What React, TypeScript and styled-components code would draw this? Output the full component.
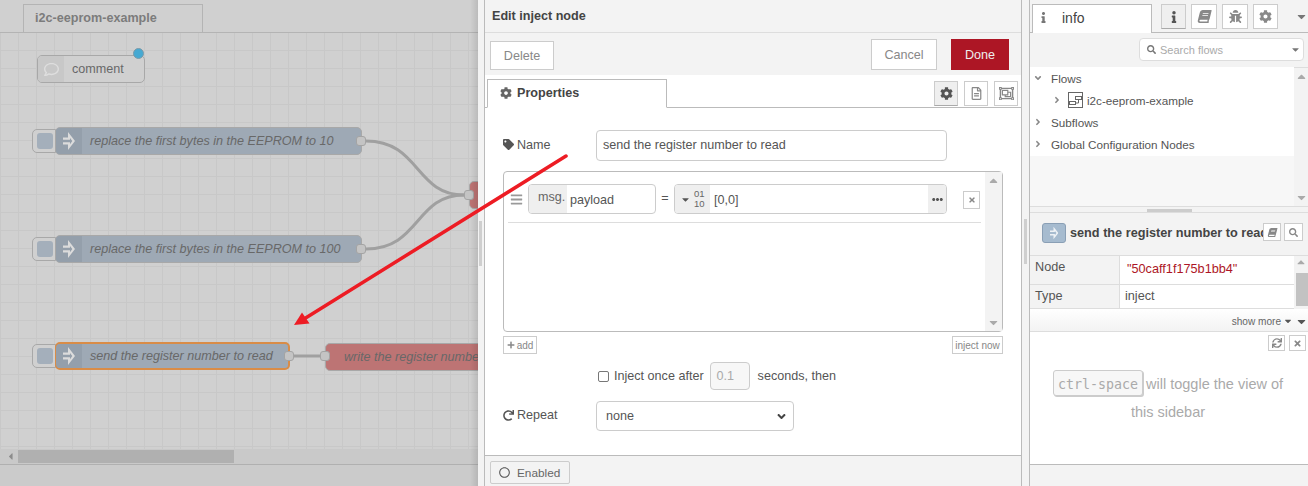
import styled, { createGlobalStyle } from "styled-components";
import {
  FaAngleDown,
  FaAngleRight,
  FaBars,
  FaBook,
  FaBug,
  FaCaretDown,
  FaCaretUp,
  FaCaretLeft,
  FaCog,
  FaEllipsisH,
  FaInfo,
  FaPlus,
  FaRedo,
  FaRegCircle,
  FaRegComment,
  FaRegFileAlt,
  FaRegObjectGroup,
  FaSearch,
  FaSync,
  FaTag,
  FaTimes,
} from "react-icons/fa";

const GlobalStyle = createGlobalStyle`
  html, body {
    margin: 0;
    padding: 0;
    background: #fff;
  }
  * {
    box-sizing: border-box;
  }
  body {
    font-family: "Liberation Sans", Arial, sans-serif;
    font-size: 12.6px;
    color: #555;
  }
`;

const Page = styled.div`
  position: relative;
  width: 1308px;
  height: 486px;
  display: flex;
  overflow: hidden;
`;

/* ---------- workspace ---------- */

const Workspace = styled.div`
  position: relative;
  width: 478px;
  display: flex;
  flex-direction: column;
  background: #d0d0d0;

  &::after {
    content: "";
    position: absolute;
    top: 0;
    right: 0;
    bottom: 0;
    width: 8px;
    background: linear-gradient(to right, rgba(0, 0, 0, 0), rgba(0, 0, 0, 0.1));
  }
`;

const WorkspaceTabs = styled.div`
  height: 33px;
  padding: 4px 0 0 23px;
  border-bottom: 1px solid #b4b4b4;
  flex: none;
`;

const WorkspaceTab = styled.div`
  width: 180px;
  height: 28px;
  padding: 0 11px;
  border: 1px solid #b4b4b4;
  border-bottom: none;
  font-weight: bold;
  line-height: 26px;
  color: #7c7c7c;
`;

const Canvas = styled.div`
  position: relative;
  flex: 1;
  overflow: hidden;
  background-color: #d0d0d0;
  background-image: linear-gradient(to right, #c8c8c8 1px, transparent 1px),
    linear-gradient(to bottom, #c8c8c8 1px, transparent 1px);
  background-size: 18px 18px;
  background-position: 0 17px;
`;

const Wires = styled.svg`
  position: absolute;
  top: 0;
  left: 0;
`;

const FlowNode = styled.div<{ $x: number; $y: number; $w: number; $tone: "blue" | "red" | "plain"; $selected?: boolean }>`
  position: absolute;
  left: ${(p) => p.$x}px;
  top: ${(p) => p.$y}px;
  width: ${(p) => p.$w}px;
  height: 28px;
  display: flex;
  align-items: center;
  border: ${(p) => (p.$selected ? "2px solid #d98c47" : "1px solid #a8a8a8")};
  border-radius: 5px;
  background: ${(p) => (p.$tone === "blue" ? "#9ea9b5" : p.$tone === "red" ? "#bd7474" : "#d0d0d0")};
  color: #686868;
  white-space: nowrap;
`;

const NodeIcon = styled.div<{ $tone: "blue" | "plain"; $selected?: boolean }>`
  width: 26px;
  margin-left: ${(p) => (p.$selected ? -1 : 0)}px;
  align-self: stretch;
  flex: none;
  display: flex;
  align-items: center;
  justify-content: center;
  border-radius: 4px 0 0 4px;
  background: ${(p) => (p.$tone === "blue" ? "#949fab" : "#c8c8c8")};
  color: #dcdcdc;
`;

const NodeLabel = styled.span<{ $italic?: boolean; $pad?: number }>`
  padding-left: ${(p) => p.$pad ?? 8}px;
  font-style: ${(p) => (p.$italic ? "italic" : "normal")};
`;

const InjectButton = styled.div<{ $x: number; $y: number }>`
  position: absolute;
  left: ${(p) => p.$x}px;
  top: ${(p) => p.$y}px;
  width: 24px;
  height: 24px;
  border: 1px solid #a8a8a8;
  border-radius: 5px 0 0 5px;
  background: #d0d0d0;

  &::after {
    content: "";
    position: absolute;
    left: 4px;
    top: 3px;
    width: 16px;
    height: 16px;
    border-radius: 3px;
    background: #a4afbb;
  }
`;

const Port = styled.div<{ $x: number; $y: number }>`
  position: absolute;
  left: ${(p) => p.$x - 5}px;
  top: ${(p) => p.$y - 5}px;
  width: 10px;
  height: 10px;
  border: 1px solid #a4a4a4;
  border-radius: 3px;
  background: #c4c4c4;
`;

const ChangedDot = styled.div`
  position: absolute;
  left: 133px;
  top: 15px;
  width: 11px;
  height: 11px;
  border-radius: 50%;
  border: 1px solid #7d9aa8;
  background: #46a9d2;
`;

const HScroll = styled.div`
  position: relative;
  height: 15px;
  flex: none;
  padding: 1px 0 1px 18px;
  background: #c9c9c9;
  color: #8c8c8c;
  font-size: 11px;

  svg {
    position: absolute;
    left: 5px;
    top: 2px;
  }
`;

const HThumb = styled.div`
  width: 216px;
  height: 13px;
  background: #b0b0b0;
`;

const WorkspaceFooter = styled.div`
  height: 22px;
  flex: none;
  border-top: 1px solid #b0b0b0;
  background: #cbcbcb;
`;

/* ---------- gutters between panels ---------- */

const Gutter = styled.div<{ $w: number; $handleLeft: number; $handleTop: number }>`
  position: relative;
  width: ${(p) => p.$w}px;
  flex: none;
  background: #f3f3f3;

  &::after {
    content: "";
    position: absolute;
    left: ${(p) => p.$handleLeft}px;
    top: ${(p) => p.$handleTop}px;
    width: 3px;
    height: 45px;
    background: #cfcfcf;
  }
`;

/* ---------- edit tray ---------- */

const Tray = styled.div`
  width: 538px;
  flex: none;
  display: flex;
  flex-direction: column;
  border-left: 1px solid #bbb;
  border-right: 1px solid #bbb;
  background: #fff;
`;

const TrayTitle = styled.div`
  height: 33px;
  flex: none;
  padding: 9px 7px 0;
  background: #f3f3f3;
  border-bottom: 1px solid #ddd;
  font-weight: bold;
  color: #444;
`;

const TrayToolbar = styled.div`
  height: 42px;
  flex: none;
  display: flex;
  align-items: flex-end;
  padding: 0 12px 5px 5px;
  gap: 14px;
  background: #f3f3f3;
`;

const Spacer = styled.div`
  flex: 1;
`;

const TrayButton = styled.button<{ $primary?: boolean; $h: number; $w: number }>`
  width: ${(p) => p.$w}px;
  height: ${(p) => p.$h}px;
  padding: 0;
  border: 1px solid ${(p) => (p.$primary ? "#ad1625" : "#ccc")};
  background: ${(p) => (p.$primary ? "#ad1625" : "#fff")};
  color: ${(p) => (p.$primary ? "#eee" : "#888")};
  font-family: inherit;
  font-size: 12.6px;
`;

const TrayTabs = styled.div`
  height: 33px;
  flex: none;
  display: flex;
  align-items: flex-end;
  padding: 0 2px 0 2px;
  border-bottom: 1px solid #bbb;
`;

const PropertiesTab = styled.div`
  width: 180px;
  height: 29px;
  margin-bottom: -1px;
  display: flex;
  align-items: center;
  gap: 5px;
  padding: 0 0 2px 12px;
  border: 1px solid #bbb;
  border-bottom: 1px solid #fff;
  background: #fff;
  font-weight: bold;
  color: #444;

  svg {
    color: #666;
    font-size: 12px;
  }
`;

const TabIcons = styled.div`
  margin-left: auto;
  display: flex;
  gap: 6px;
  padding: 0 1px 1px 0;
`;

const IconButton = styled.div<{ $w: number; $h: number; $active?: boolean; $size?: number }>`
  width: ${(p) => p.$w}px;
  height: ${(p) => p.$h}px;
  display: flex;
  align-items: center;
  justify-content: center;
  flex: none;
  border: 1px solid #ccc;
  border-bottom-color: ${(p) => (p.$active ? "#aaa" : "#ccc")};
  background: ${(p) => (p.$active ? "#efefef" : "#fff")};
  color: ${(p) => (p.$active ? "#555" : "#888")};
  font-size: ${(p) => p.$size ?? 13}px;
`;

const TiltedBook = styled(FaBook)`
  transform: skewX(-14deg);
`;

const TrayBody = styled.div`
  flex: 1;
  padding: 22px 18px 0;
  display: flex;
  flex-direction: column;
`;

const FormRow = styled.div<{ $mb?: number }>`
  display: flex;
  align-items: center;
  margin-bottom: ${(p) => p.$mb ?? 0}px;
`;

const FieldLabel = styled.label`
  width: 93px;
  margin-top: -2px;
  display: flex;
  align-items: center;
  gap: 3px;
  color: #555;

  svg {
    font-size: 11px;
  }
`;

const TextBox = styled.div`
  width: 351px;
  height: 31px;
  padding: 0 6px 1px;
  display: flex;
  align-items: center;
  border: 1px solid #ccc;
  border-radius: 4px;
  color: #555;
`;

const ListBox = styled.div`
  position: relative;
  width: 500px;
  height: 161px;
  border: 1px solid #bbb;
  border-radius: 4px;
  display: flex;
`;

const ListContent = styled.div`
  flex: 1;
  padding: 12px 4px 0 4px;
`;

const ListRow = styled.div`
  height: 39px;
  display: flex;
  align-items: flex-start;
  border-bottom: 1px solid #ddd;
  color: #999;
`;

const DragHandle = styled.div`
  width: 20px;
  height: 30px;
  padding-left: 2px;
  display: flex;
  align-items: center;
  font-size: 13px;
`;

const MsgField = styled.div`
  width: 128px;
  height: 30px;
  display: flex;
  align-items: stretch;
  border: 1px solid #ccc;
  border-radius: 4px;
  overflow: hidden;
  color: #555;
`;

const MsgPrefix = styled.div`
  width: 38px;
  padding: 5px 0 0 9px;
  background: #efefef;
  color: #666;
`;

const MsgValue = styled.div`
  padding: 8px 0 0 3px;
`;

const EqualSign = styled.div`
  width: 18px;
  height: 30px;
  line-height: 28px;
  text-align: center;
  color: #555;
`;

const TypedField = styled.div`
  width: 273px;
  height: 30px;
  display: flex;
  align-items: stretch;
  border: 1px solid #ccc;
  border-radius: 4px;
  overflow: hidden;
  color: #555;
`;

const TypeSelect = styled.div`
  width: 35px;
  flex: none;
  display: flex;
  align-items: center;
  gap: 3px;
  padding-left: 5px;
  background: #efefef;
  color: #555;
  font-size: 11px;
`;

const BinaryGlyph = styled.div`
  font-size: 9.5px;
  line-height: 10px;
  color: #666;
`;

const TypedValue = styled.div`
  flex: 1;
  padding: 8px 0 0 4px;
`;

const ExpandButton = styled.div`
  width: 18px;
  flex: none;
  display: flex;
  align-items: center;
  justify-content: center;
  background: #efefef;
  color: #555;
  font-size: 11px;
`;

const RemoveButton = styled.div`
  width: 17px;
  height: 18px;
  margin: 7px 0 0 16px;
  display: flex;
  align-items: center;
  justify-content: center;
  border: 1px solid #ccc;
  color: #888;
  font-size: 8px;
`;

const VScroll = styled.div<{ $w: number }>`
  width: ${(p) => p.$w}px;
  flex: none;
  display: flex;
  flex-direction: column;
  justify-content: space-between;
  align-items: center;
  padding: 2px 0;
  background: #f3f3f3;
  color: #aaa;
  font-size: 13px;
`;

const ListActions = styled.div`
  width: 500px;
  margin-top: 4px;
  display: flex;
  justify-content: space-between;
`;

const SmallButton = styled.div<{ $w: number }>`
  width: ${(p) => p.$w}px;
  height: 18px;
  display: flex;
  align-items: center;
  justify-content: center;
  gap: 2px;
  border: 1px solid #ccc;
  color: #888;
  font-size: 10px;

  svg {
    font-size: 8px;
  }
`;

const OnceRow = styled.div`
  margin: 8px 0 11px 93px;
  height: 28px;
  display: flex;
  align-items: center;
  color: #555;
`;

const CheckBox = styled.div`
  width: 11px;
  height: 11px;
  margin: 0 5px 0 2px;
  border: 1px solid #777;
  border-radius: 2px;
`;

const SecondsBox = styled.div`
  width: 40px;
  height: 28px;
  margin: 0 8px 0 6px;
  padding-left: 6px;
  line-height: 26px;
  border: 1px solid #ccc;
  border-radius: 4px;
  background: #f7f7f7;
  color: #aaa;
`;

const SelectBox = styled.div`
  width: 198px;
  height: 30px;
  padding: 0 5px 0 9px;
  display: flex;
  align-items: center;
  justify-content: space-between;
  border: 1px solid #ccc;
  border-radius: 4px;
  color: #555;

  svg {
    font-size: 13px;
    color: #444;
  }
`;

const TrayFooter = styled.div`
  height: 31px;
  flex: none;
  padding: 5px 5px 0;
  border-top: 1px solid #bbb;
  background: #f3f3f3;
`;

const EnabledButton = styled.div`
  width: 80px;
  height: 23px;
  display: flex;
  align-items: center;
  gap: 7px;
  padding-left: 8px;
  border: 1px solid #ccc;
  border-radius: 2px;
  color: #666;
  font-size: 11.8px;

  svg {
    font-size: 11px;
    color: #555;
  }
`;

/* ---------- sidebar ---------- */

const Sidebar = styled.div`
  width: 279px;
  flex: none;
  display: flex;
  flex-direction: column;
  border-left: 1px solid #bbb;
  background: #fff;
`;

const SidebarTabs = styled.div`
  height: 33px;
  flex: none;
  display: flex;
  align-items: flex-start;
  gap: 5px;
  padding: 4px 0 0 2px;
  background: #f3f3f3;
  border-bottom: 1px solid #bbb;
`;

const InfoTab = styled.div`
  width: 120px;
  height: 29px;
  margin-right: 4px;
  display: flex;
  align-items: center;
  gap: 13px;
  padding: 0 0 3px 5px;
  border: 1px solid #bbb;
  border-bottom: none;
  background: #fff;
  font-size: 14px;
  color: #444;

  svg {
    color: #777;
    font-size: 11px;
  }
`;

const MenuCaret = styled.div`
  margin: 6px 0 0 12px;
  color: #777;
  font-size: 13px;
`;

const SearchRow = styled.div`
  height: 35px;
  flex: none;
  padding: 5px 4px 0 0;
  display: flex;
  justify-content: flex-end;
  background: #f3f3f3;
  border-bottom: 1px solid #ddd;
`;

const SearchBox = styled.div`
  width: 165px;
  height: 23px;
  display: flex;
  align-items: center;
  padding: 0 2px 0 7px;
  gap: 4px;
  border: 1px solid #ddd;
  border-radius: 4px;
  background: #fff;
  color: #aaa;
  font-size: 11px;

  svg:first-child {
    color: #777;
    font-size: 9px;
  }
  svg:last-child {
    margin-left: auto;
    color: #777;
    font-size: 11px;
  }
`;

const TreePanel = styled.div`
  height: 138px;
  flex: none;
  display: flex;
`;

const TreeContent = styled.div`
  flex: 1;
  background: #f7f7f7;
`;

const TreeRows = styled.div`
  height: 89px;
  margin-top: -1px;
  background: #fff;
`;

const TreeRow = styled.div<{ $indent?: number }>`
  height: 22px;
  display: flex;
  align-items: center;
  padding-left: ${(p) => 3 + (p.$indent ?? 0)}px;
  color: #555;
  font-size: 11.7px;

  svg:first-child {
    flex: none;
    width: 10px;
    margin-right: 8px;
    color: #888;
    font-size: 10px;
  }
`;

const FlowGlyph = styled.svg`
  margin: 0 4px 0 -2px;
`;

const PanelHandle = styled.div`
  height: 7px;
  flex: none;
  display: flex;
  justify-content: center;
  padding-top: 2px;
  background: #f3f3f3;
  border-top: 1px solid #ddd;
  border-bottom: 1px solid #ddd;

  &::after {
    content: "";
    width: 45px;
    height: 3px;
    background: #ccc;
  }
`;

const NodeHeader = styled.div`
  height: 43px;
  flex: none;
  display: flex;
  align-items: flex-start;
  position: relative;
  padding: 10px 0 0 12px;
  background: #f3f3f3;
  border-bottom: 1px solid #ddd;
`;

const NodeChip = styled.div`
  width: 24px;
  height: 20px;
  flex: none;
  display: flex;
  align-items: center;
  justify-content: center;
  border: 1px solid #8a9fb5;
  border-radius: 3px;
  background: #a6bbcf;
`;

const NodeTitle = styled.div`
  width: 193px;
  margin-left: 4px;
  overflow: hidden;
  font-size: 12.7px;
  font-weight: bold;
  line-height: 20px;
  color: #444;
  white-space: nowrap;
`;

const HeaderActions = styled.div`
  position: absolute;
  right: 5px;
  top: 10px;
  display: flex;
  gap: 3px;
`;

const PropsPanel = styled.div`
  height: 53px;
  flex: none;
  display: flex;
`;

const PropsTable = styled.div`
  flex: 1;
  font-size: 12.7px;
`;

const PropRow = styled.div<{ $h: number }>`
  height: ${(p) => p.$h}px;
  display: flex;
  border-bottom: 1px solid #ddd;
`;

const PropKey = styled.div`
  width: 90px;
  flex: none;
  padding: 4px 0 0 5px;
  background: #f3f3f3;
  border-right: 1px solid #ddd;
  color: #555;
`;

const PropValue = styled.div<{ $red?: boolean }>`
  padding: ${(p) => (p.$red ? "6px 0 0 7px" : "4px 0 0 5px")};
  color: ${(p) => (p.$red ? "#ad1625" : "#555")};
`;

const ScrollTrack = styled.div`
  position: relative;
  width: 14px;
  flex: none;
  background: #f3f3f3;
  color: #aaa;
  font-size: 12px;
  text-align: center;
  line-height: 14px;
`;

const ScrollThumb = styled.div`
  position: absolute;
  left: 2px;
  right: 0;
  top: 17px;
  height: 33px;
  background: #c2c2c2;
`;

const ShowMoreRow = styled.div`
  height: 23px;
  flex: none;
  display: flex;
  align-items: center;
  justify-content: flex-end;
  padding-top: 2px;
  gap: 2px;
  border-bottom: 1px solid #ddd;
  background: linear-gradient(to bottom, #fff, #f3f3f3);
  color: #666;
  font-size: 10.1px;

  svg {
    font-size: 10px;
    color: #555;
  }
`;

const ScrollDownCaret = styled(FaCaretDown)`
  && {
    font-size: 13px;
  }
`;

const HelpPanel = styled.div`
  flex: 1;
  padding: 3px 2px 0 0;
  border-bottom: 1px solid #bbb;
`;

const HelpActions = styled.div`
  display: flex;
  justify-content: flex-end;
  gap: 4px;
`;

const HelpText = styled.div`
  margin-top: 19px;
  padding: 0 20px;
  text-align: center;
  line-height: 28px;
  color: #aaa;
  font-size: 14.5px;
`;

const Kbd = styled.kbd`
  display: inline-block;
  height: 26px;
  padding: 0 4px;
  margin-right: -1px;
  border: 1px solid #ccc;
  border-radius: 3px;
  box-shadow: #ccc 1px 1px 0;
  background: #f7f7f7;
  font-family: "DejaVu Sans Mono", monospace;
  font-size: 13.3px;
  line-height: 27px;
  color: #aaa;
`;

const SidebarFooter = styled.div`
  height: 21px;
  flex: none;
  background: #f3f3f3;
`;

const ArrowOverlay = styled.svg`
  position: absolute;
  top: 0;
  left: 0;
  pointer-events: none;
`;

function InjectGlyph({ height = 20, color = "#dcdcdc" }: { height?: number; color?: string }) {
  return (
    <svg width={(height * 12) / 20} height={height} viewBox="0 0 12 20">
      <path d="M0 6.5h5V1l7 9-7 9v-5.5H0v-2.2h7v2L9.3 10 7 7v1.7H0z" fill={color} />
    </svg>
  );
}

type InjectProps = { x: number; y: number; w: number; label: string; selected?: boolean };

function InjectNode({ x, y, w, label, selected }: InjectProps) {
  return (
    <>
      <InjectButton $x={x - 23} $y={y + 2} />
      <FlowNode $x={x} $y={y} $w={w} $tone="blue" $selected={selected}>
        <NodeIcon $tone="blue" $selected={selected}>
          <InjectGlyph />
        </NodeIcon>
        <NodeLabel $italic>{label}</NodeLabel>
      </FlowNode>
    </>
  );
}

export default function App() {
  return (
    <Page>
      <GlobalStyle />

      <Workspace>
        <WorkspaceTabs>
          <WorkspaceTab>i2c-eeprom-example</WorkspaceTab>
        </WorkspaceTabs>
        <Canvas>
          <Wires width={478} height={416}>
            <g fill="none" stroke="#a0a0a0" strokeWidth={3}>
              <path d="M366 108C420 108 415 162 464 162" />
              <path d="M366 216C420 216 415 162 464 162" />
              <path d="M294 323H320" />
            </g>
          </Wires>
          <FlowNode $x={37} $y={22} $w={108} $tone="plain">
            <NodeIcon $tone="plain">
              <FaRegComment size={15} color="#dedede" />
            </NodeIcon>
            <NodeLabel>comment</NodeLabel>
          </FlowNode>
          <ChangedDot />
          <InjectNode x={55} y={94} w={307} label="replace the first bytes in the EEPROM to 10" />
          <Port $x={361} $y={108} />
          <InjectNode x={55} y={202} w={307} label="replace the first bytes in the EEPROM to 100" />
          <Port $x={361} $y={216} />
          <FlowNode $x={469} $y={148} $w={100} $tone="red" />
          <Port $x={469} $y={162} />
          <InjectNode x={55} y={309} w={235} label="send the register number to read" selected />
          <Port $x={289} $y={323} />
          <FlowNode $x={325} $y={310} $w={240} $tone="red">
            <NodeLabel $italic $pad={18}>
              write the register number
            </NodeLabel>
          </FlowNode>
          <Port $x={325} $y={323} />
        </Canvas>
        <HScroll>
          <FaCaretLeft />
          <HThumb />
        </HScroll>
        <WorkspaceFooter />
      </Workspace>

      <Gutter $w={6} $handleLeft={1} $handleTop={221} />

      <Tray>
        <TrayTitle>Edit inject node</TrayTitle>
        <TrayToolbar>
          <TrayButton $w={64} $h={29}>Delete</TrayButton>
          <Spacer />
          <TrayButton $w={66} $h={31}>Cancel</TrayButton>
          <TrayButton $w={58} $h={31} $primary>Done</TrayButton>
        </TrayToolbar>
        <TrayTabs>
          <PropertiesTab>
            <FaCog />
            Properties
          </PropertiesTab>
          <TabIcons>
            <IconButton $w={24} $h={25} $active>
              <FaCog />
            </IconButton>
            <IconButton $w={24} $h={25}>
              <FaRegFileAlt />
            </IconButton>
            <IconButton $w={24} $h={25} $size={15}>
              <FaRegObjectGroup />
            </IconButton>
          </TabIcons>
        </TrayTabs>

        <TrayBody>
          <FormRow $mb={10}>
            <FieldLabel>
              <FaTag />
              Name
            </FieldLabel>
            <TextBox>send the register number to read</TextBox>
          </FormRow>

          <ListBox>
            <ListContent>
              <ListRow>
                <DragHandle>
                  <FaBars />
                </DragHandle>
                <MsgField>
                  <MsgPrefix>msg.</MsgPrefix>
                  <MsgValue>payload</MsgValue>
                </MsgField>
                <EqualSign>=</EqualSign>
                <TypedField>
                  <TypeSelect>
                    <FaCaretDown />
                    <BinaryGlyph>
                      01
                      <br />
                      10
                    </BinaryGlyph>
                  </TypeSelect>
                  <TypedValue>[0,0]</TypedValue>
                  <ExpandButton>
                    <FaEllipsisH />
                  </ExpandButton>
                </TypedField>
                <RemoveButton>
                  <FaTimes />
                </RemoveButton>
              </ListRow>
            </ListContent>
            <VScroll $w={17}>
              <FaCaretUp />
              <FaCaretDown />
            </VScroll>
          </ListBox>

          <ListActions>
            <SmallButton $w={34}>
              <FaPlus />
              add
            </SmallButton>
            <SmallButton $w={51}>inject now</SmallButton>
          </ListActions>

          <OnceRow>
            <CheckBox />
            Inject once after
            <SecondsBox>0.1</SecondsBox>
            seconds, then
          </OnceRow>

          <FormRow>
            <FieldLabel>
              <FaRedo />
              Repeat
            </FieldLabel>
            <SelectBox>
              none
              <FaAngleDown />
            </SelectBox>
          </FormRow>
        </TrayBody>

        <TrayFooter>
          <EnabledButton>
            <FaRegCircle />
            Enabled
          </EnabledButton>
        </TrayFooter>
      </Tray>

      <Gutter $w={7} $handleLeft={2} $handleTop={219} />

      <Sidebar>
        <SidebarTabs>
          <InfoTab>
            <FaInfo />
            info
          </InfoTab>
          <IconButton $w={25} $h={25} $active $size={12}>
            <FaInfo />
          </IconButton>
          <IconButton $w={26} $h={25}>
            <TiltedBook />
          </IconButton>
          <IconButton $w={26} $h={25}>
            <FaBug />
          </IconButton>
          <IconButton $w={25} $h={25}>
            <FaCog />
          </IconButton>
          <MenuCaret>
            <FaCaretDown />
          </MenuCaret>
        </SidebarTabs>

        <SearchRow>
          <SearchBox>
            <FaSearch />
            Search flows
            <FaCaretDown />
          </SearchBox>
        </SearchRow>

        <TreePanel>
          <TreeContent>
            <TreeRows>
              <TreeRow>
                <FaAngleDown />
                Flows
              </TreeRow>
              <TreeRow $indent={19}>
                <FaAngleRight />
                <FlowGlyph width={15} height={16} viewBox="0 0 15 16">
                  <g fill="none" stroke="#666" strokeWidth={1}>
                    <rect x={0.5} y={0.5} width={14} height={15} />
                    <rect x={7.5} y={4.5} width={6} height={3} />
                    <rect x={1.5} y={9.5} width={6} height={3} />
                    <path d="M7.5 11h3V8" />
                  </g>
                </FlowGlyph>
                i2c-eeprom-example
              </TreeRow>
              <TreeRow>
                <FaAngleRight />
                Subflows
              </TreeRow>
              <TreeRow>
                <FaAngleRight />
                Global Configuration Nodes
              </TreeRow>
            </TreeRows>
          </TreeContent>
          <VScroll $w={14}>
            <FaCaretUp />
            <FaCaretDown />
          </VScroll>
        </TreePanel>

        <PanelHandle />

        <NodeHeader>
          <NodeChip>
            <InjectGlyph height={14} color="#eef2f6" />
          </NodeChip>
          <NodeTitle>send the register number to read</NodeTitle>
          <HeaderActions>
            <IconButton $w={18} $h={18} $size={9}>
              <TiltedBook />
            </IconButton>
            <IconButton $w={19} $h={18} $size={9}>
              <FaSearch />
            </IconButton>
          </HeaderActions>
        </NodeHeader>

        <PropsPanel>
          <PropsTable>
            <PropRow $h={29}>
              <PropKey>Node</PropKey>
              <PropValue $red>"50caff1f175b1bb4"</PropValue>
            </PropRow>
            <PropRow $h={24}>
              <PropKey>Type</PropKey>
              <PropValue>inject</PropValue>
            </PropRow>
          </PropsTable>
          <ScrollTrack>
            <FaCaretUp />
            <ScrollThumb />
          </ScrollTrack>
        </PropsPanel>

        <ShowMoreRow>
          show more
          <FaCaretDown />
          <ScrollDownCaret />
        </ShowMoreRow>

        <HelpPanel>
          <HelpActions>
            <IconButton $w={17} $h={16} $size={10}>
              <FaSync />
            </IconButton>
            <IconButton $w={17} $h={16} $size={9}>
              <FaTimes />
            </IconButton>
          </HelpActions>
          <HelpText>
            <Kbd>ctrl-space</Kbd> will toggle the view of this sidebar
          </HelpText>
        </HelpPanel>
        <SidebarFooter />
      </Sidebar>

      <ArrowOverlay width={1308} height={486} viewBox="0 0 1308 486">
        <line x1={566} y1={156} x2={304} y2={319} stroke="#ed1c24" strokeWidth={3.5} strokeLinecap="round" />
        <path d="M294 325L302 312.5L309.5 323.5Z" fill="#ed1c24" />
      </ArrowOverlay>
    </Page>
  );
}
